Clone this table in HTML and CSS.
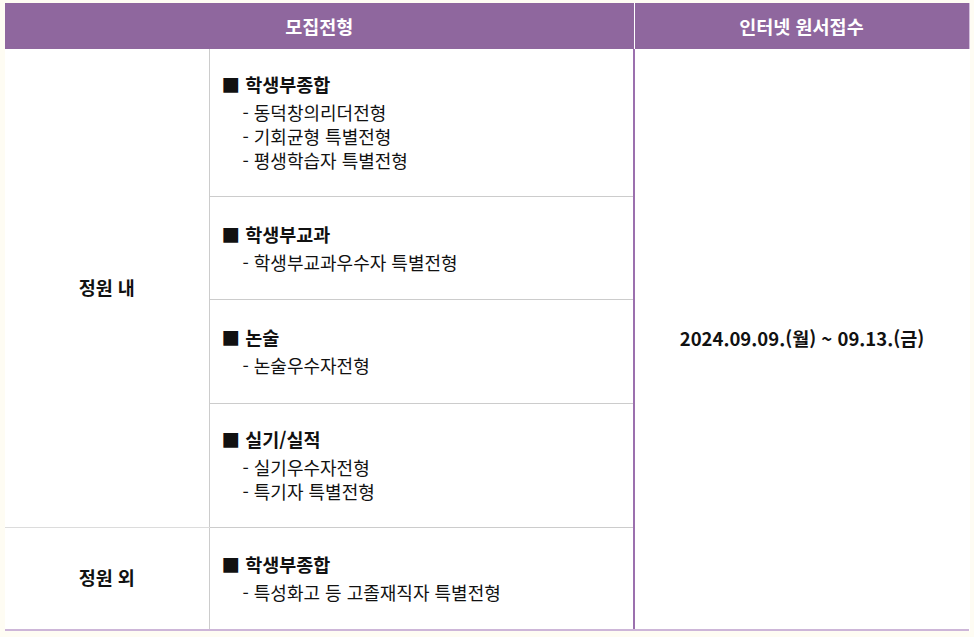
FILE: index.html
```html
<!DOCTYPE html>
<html lang="ko">
<head>
<meta charset="utf-8">
<link rel="stylesheet" href="styles.css">
</head>
<body>
<table class="sched">
  <colgroup>
    <col class="c-cat">
    <col class="c-type">
    <col class="c-date">
  </colgroup>
  <thead>
    <tr class="head-row">
      <th colspan="2" class="th-main">모집전형</th>
      <th class="th-date">인터넷 원서접수</th>
    </tr>
  </thead>
  <tbody>
    <tr class="r1">
      <td rowspan="4" class="cat">정원 내</td>
      <td class="type">
        <div class="ttl">■ 학생부종합</div>
        <ul class="items">
          <li>- 동덕창의리더전형</li>
          <li>- 기회균형 특별전형</li>
          <li>- 평생학습자 특별전형</li>
        </ul>
      </td>
      <td rowspan="5" class="date">2024.09.09.(월) ~ 09.13.(금)</td>
    </tr>
    <tr class="r2">
      <td class="type">
        <div class="ttl">■ 학생부교과</div>
        <ul class="items">
          <li>- 학생부교과우수자 특별전형</li>
        </ul>
      </td>
    </tr>
    <tr class="r3">
      <td class="type">
        <div class="ttl">■ 논술</div>
        <ul class="items">
          <li>- 논술우수자전형</li>
        </ul>
      </td>
    </tr>
    <tr class="r4">
      <td class="type">
        <div class="ttl">■ 실기/실적</div>
        <ul class="items">
          <li>- 실기우수자전형</li>
          <li>- 특기자 특별전형</li>
        </ul>
      </td>
    </tr>
    <tr class="r5">
      <td class="cat cat-last">정원 외</td>
      <td class="type type-last">
        <div class="ttl">■ 학생부종합</div>
        <ul class="items">
          <li>- 특성화고 등 고졸재직자 특별전형</li>
        </ul>
      </td>
    </tr>
  </tbody>
</table>
</body>
</html>
```
FILE: styles.css
```css
html, body {
  margin: 0;
  padding: 0;
  background: #fefcf3;
}
body {
  padding: 3px 5px 0 5px;
  font-family: "Noto Sans CJK KR", "Noto Sans", sans-serif;
  color: #111;
}
.sched {
  width: 964px;
  border-collapse: collapse;
  table-layout: fixed;
  background: #ffffff;
}
.c-cat { width: 204px; }
.c-type { width: 425px; }
.c-date { width: 335px; }
.head-row {
  height: 46px;
  background: #8f679e;
}
.head-row th {
  color: #ffffff;
  font-size: 18.5px;
  font-weight: 700;
  padding: 0;
  text-align: center;
  vertical-align: middle;
}
.th-main {
  border-right: 1px solid #ffffff;
}
.th-date {
  border-right: 1px solid #d4bfdd;
}
.cat {
  text-align: center;
  vertical-align: middle;
  font-size: 18.5px;
  font-weight: 700;
  border-right: 1px solid #cccccc;
  border-bottom: 1px solid #dcdcdc;
  padding: 0 0 2px 0;
}
.cat-last {
  border-bottom: 2px solid #cdb6d8;
}
.type {
  vertical-align: middle;
  padding: 0 0 4px 12px;
  border-bottom: 1px solid #cccccc;
  border-right: 2px solid #9b70ae;
}
.type-last {
  border-bottom: 2px solid #cdb6d8;
}
.date {
  text-align: center;
  vertical-align: middle;
  font-size: 18.5px;
  font-weight: 700;
  border-bottom: 2px solid #cdb6d8;
  padding: 0 0 2px 0;
}
.ttl {
  font-size: 18.5px;
  font-weight: 700;
  line-height: 32px;
}
.items {
  list-style: none;
  margin: 0;
  padding: 0 0 0 21px;
}
.items li {
  font-size: 18px;
  line-height: 24px;
}
.r1 { height: 147px; }
.r2 { height: 103px; }
.r3 { height: 104px; }
.r4 { height: 124px; }
.r5 { height: 103px; }
```
